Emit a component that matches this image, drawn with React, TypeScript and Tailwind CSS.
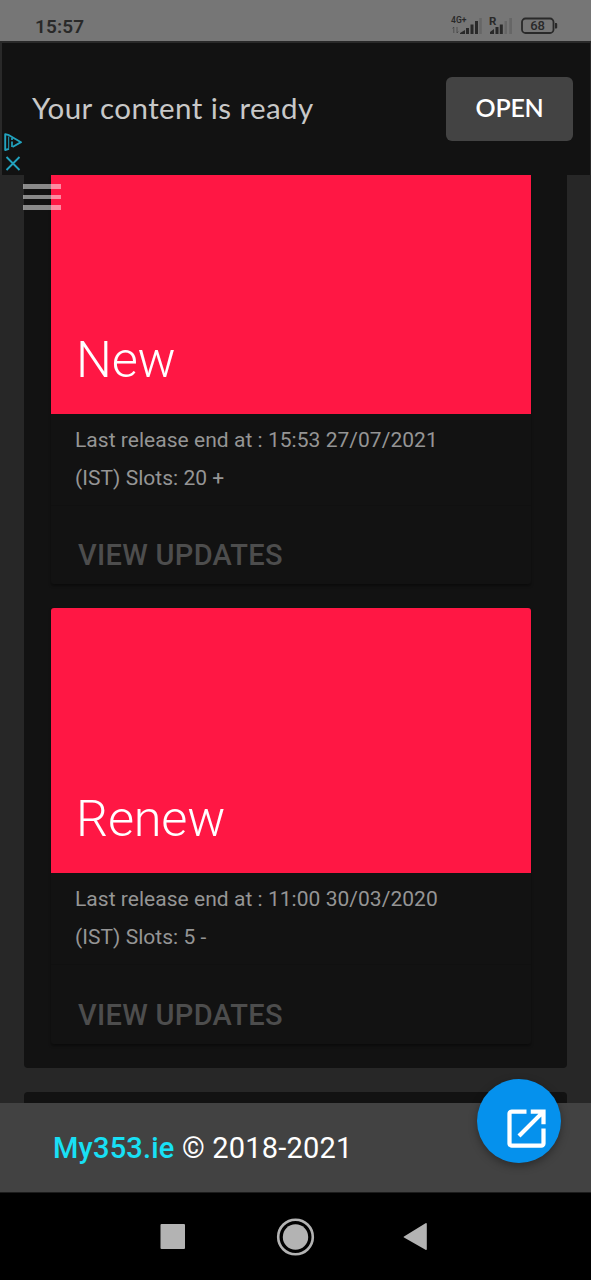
interface Release {
  title: string
  lastRelease: string
  slots: string
}

const releases: Release[] = [
  { title: 'New', lastRelease: '15:53 27/07/2021', slots: '20 +' },
  { title: 'Renew', lastRelease: '11:00 30/03/2020', slots: '5 -' },
]

export default function App() {
  return (
    <div className="flex h-[1280px] w-[591px] flex-col overflow-hidden bg-[#272727] font-['Roboto',sans-serif]">
      <StatusBar />
      <AdBanner />

      {/* Content */}
      <main className="relative flex min-h-0 flex-1 flex-col gap-6 overflow-hidden pr-6 pl-6">
        <section className="flex shrink-0 flex-col gap-6 rounded-b bg-[#121212] pr-9 pb-6 pl-[27px]">
          {releases.map((release, i) => (
            <ReleaseCard key={release.title} release={release} clipped={i === 0} />
          ))}
        </section>
        <section className="h-20 shrink-0 rounded bg-[#121212]" />
        <button aria-label="Menu" className="absolute top-[9px] left-[23px] flex flex-col gap-[6px]">
          <span className="h-[4.5px] w-[38px] bg-white/50" />
          <span className="h-[4.5px] w-[38px] bg-white/50" />
          <span className="h-[4.5px] w-[38px] bg-white/50" />
        </button>
      </main>

      <Footer />
      <NavigationBar />
    </div>
  )
}

function StatusBar() {
  return (
    <header className="flex h-[41px] shrink-0 items-start justify-between bg-[#767676] pr-[33px] pl-[35px] text-[#292929]">
      <span className="mt-[13px] text-[19px] leading-[27px] font-semibold tracking-[0.1px]">15:57</span>
      <svg width="108" height="22" viewBox="0 0 108 22" className="mt-[14px]" fill="currentColor">
        <text x="1" y="9" fontSize="8.500" fontWeight="600" textLength="15.5">4G+</text>
        <path d="M3.800 19v-6M2.500 14.500l1.300-1.500M7 13v6M8.300 17.500L7 19" fill="none" stroke="currentColor" opacity="0.5" />
        <path d="M10 19l5-3v4h-5zM16 14h3v6h-3zM20.500 10.500h3V20h-3zM25 7h3v13h-3z" />
        <path d="M29.300 4h2.500v16h-2.500z" opacity="0.2" />
        <text x="39" y="10.800" fontSize="11.500" fontWeight="700">R</text>
        <path d="M40 18l4-3v5h-4zM45.500 13h3v7h-3zM49.800 10.500h3V20h-3z" />
        <path d="M54.500 7H57v13h-2.500zM59.300 4H62v16h-2.700z" opacity="0.2" />
        <rect x="72" y="4.500" width="31.500" height="14.500" rx="3.500" fill="none" stroke="currentColor" strokeWidth="1.800" />
        <path d="M105 9h1.200q1 0 1 1v3.500q0 1-1 1H105z" />
        <text x="87.600" y="16.300" fontSize="13" fontWeight="500" textAnchor="middle">68</text>
      </svg>
    </header>
  )
}

function AdBanner() {
  return (
    <aside className="flex h-[134px] shrink-0 items-center justify-between border-t-2 border-r border-l-2 border-[#292929] bg-[#121212] pr-[17px]">
      <div className="flex h-full items-center">
        <div className="flex h-full w-[30px] flex-col justify-end gap-[5px] pb-1 pl-[2px] text-[#22a3bf]">
          <svg width="18" height="18" viewBox="0 0 18 18" fill="none" stroke="currentColor" strokeWidth="1.900" strokeLinejoin="round">
            <path d="M5 15.800L1.200 17V1.200L5 2.200 17 9.200 8.500 14" />
            <path d="M4.700 3.500v12" strokeWidth="1" />
            <path d="M8 8.500v5.500M8 5v2" strokeWidth="1.700" />
          </svg>
          <svg width="18" height="15" viewBox="0 0 18 15" fill="none" stroke="currentColor" strokeWidth="1.900">
            <path d="M2.500 1l13 13M15.500 1l-13 13" />
          </svg>
        </div>
        <p className="-mt-[3px] font-['Lato',sans-serif] text-[29.500px] leading-9 tracking-[0.42px] text-[#c8c8c8]">
          Your content is ready
        </p>
      </div>
      <button className="h-16 w-[127px] rounded-md bg-[#434343] pb-0.5 font-['Lato',sans-serif] text-[25px] font-semibold tracking-[-0.3px] text-white">
        OPEN
      </button>
    </aside>
  )
}

function ReleaseCard({ release, clipped }: { release: Release; clipped: boolean }) {
  return (
    <article className="rounded-[3px] shadow-[0_2px_3px_rgba(0,0,0,0.4)]">
      <div className={`flex items-end bg-[#ff1744] px-[25px] pb-6 ${clipped ? 'h-[239px]' : 'h-[265px] rounded-t-[3px]'}`}>
        <h2 className="text-[50.500px] leading-[60px] font-light tracking-[-0.2px] text-white">{release.title}</h2>
      </div>
      <div className="h-[92px] border-b border-[#101010] px-6 pt-[7px] text-[21px] leading-[38px] tracking-[0.035px] text-[#959595]">
        <p>Last release end at : {release.lastRelease}</p>
        <p>(IST) Slots: {release.slots}</p>
      </div>
      <div className={`flex items-end px-[27px] pb-3 ${clipped ? 'h-[78px]' : 'h-[79px]'}`}>
        <button className="text-[29px] leading-[34px] font-medium tracking-[0.3px] text-[#4d4d4d]">VIEW UPDATES</button>
      </div>
    </article>
  )
}

function Footer() {
  return (
    <footer className="relative flex h-[89px] shrink-0 items-center bg-[#424242] pl-[53px]">
      <p className="text-[29px] leading-9 tracking-[0.2px] text-white">
        <a className="font-medium text-[#18e0f5]">My353.ie</a> © 2018-2021
      </p>
      <button
        aria-label="Open"
        className="absolute top-[-24px] right-[30px] h-[84px] w-[84px] rounded-full bg-[#0591ed] shadow-[0_3px_8px_rgba(0,0,0,0.35)]"
      >
        <svg width="51" height="51" viewBox="0 0 24 24" className="absolute top-[24px] left-[24px]" fill="white">
          <path d="M19 19H5V5h7V3H5c-1.110 0-2 .9-2 2v14c0 1.100.89 2 2 2h14c1.100 0 2-.9 2-2v-7h-2v7zM14 3v2h3.590l-9.830 9.830 1.410 1.410L19 6.410V10h2V3h-7z" />
        </svg>
      </button>
    </footer>
  )
}

function NavigationBar() {
  return (
    <nav className="h-[88px] shrink-0 border-t border-[#1c1c1c] bg-black">
      <svg width="591" height="87" viewBox="0 0 591 87" fill="#b3b3b3">
        <rect x="160.500" y="31" width="24.500" height="25" rx="1" />
        <circle cx="295.500" cy="44" r="12.700" />
        <circle cx="295.500" cy="44" r="17.300" fill="none" stroke="#b3b3b3" strokeWidth="2.600" />
        <path d="M404 43.400l21.500-13.200q1.300-.6 1.300.8v25q0 1.400-1.300.8L404 44.600q-1-.6 0-1.200z" />
      </svg>
    </nav>
  )
}
